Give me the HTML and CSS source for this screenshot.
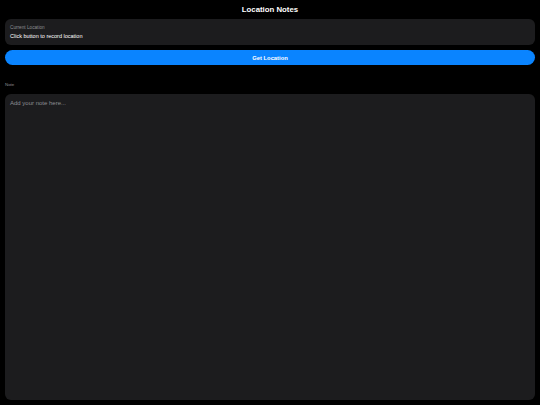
FILE: index.html
```html
<!DOCTYPE html>
<html>
<head>
<meta charset="utf-8">
<link rel="stylesheet" href="styles.css">
</head>
<body>
<div class="app">
  <h1 class="title">Location Notes</h1>
  <div class="card">
    <div class="card-label">Current Location</div>
    <div class="card-value">Click button to record location</div>
  </div>
  <button class="btn">Get Location</button>
  <div class="note-label">Note</div>
  <textarea class="note" placeholder="Add your note here..."></textarea>
</div>
</body>
</html>
```
FILE: styles.css
```css
html, body {
  margin: 0;
  padding: 0;
  background: #000;
  height: 100%;
}
body {
  font-family: "Liberation Sans", Arial, sans-serif;
  color: #fff;
}
.app {
  box-sizing: border-box;
  height: 405px;
  padding: 4px 5px 5px;
  display: flex;
  flex-direction: column;
}
.title {
  margin: 0;
  font-size: 7.8px;
  font-weight: bold;
  text-align: center;
  line-height: 11px;
  color: #fff;
}
.card {
  margin-top: 4px;
  background: #1c1c1e;
  border-radius: 6px;
  padding: 6px 5px 5px;
  height: 26px;
  box-sizing: border-box;
}
.card-label {
  font-size: 4.7px;
  color: #8e8e93;
  line-height: 6px;
}
.card-value {
  font-size: 5.5px;
  line-height: 7px;
  margin-top: 2px;
}
.btn {
  margin-top: 5px;
  height: 15px;
  border: none;
  border-radius: 8px;
  background: #0a84ff;
  color: #fff;
  font-family: "Liberation Sans", Arial, sans-serif;
  font-weight: bold;
  font-size: 5.8px;
  padding: 0;
}
.note-label {
  margin-top: 17px;
  font-size: 4.4px;
  color: #8e8e93;
  line-height: 6px;
}
.note {
  margin-top: 6px;
  flex: 1;
  background: #1c1c1e;
  border: none;
  border-radius: 6px;
  padding: 6px 5px 5px;
  color: #fff;
  font-family: "Liberation Sans", Arial, sans-serif;
  font-size: 6px;
  resize: none;
  outline: none;
}
.note::placeholder {
  color: #8e8e93;
}
```
